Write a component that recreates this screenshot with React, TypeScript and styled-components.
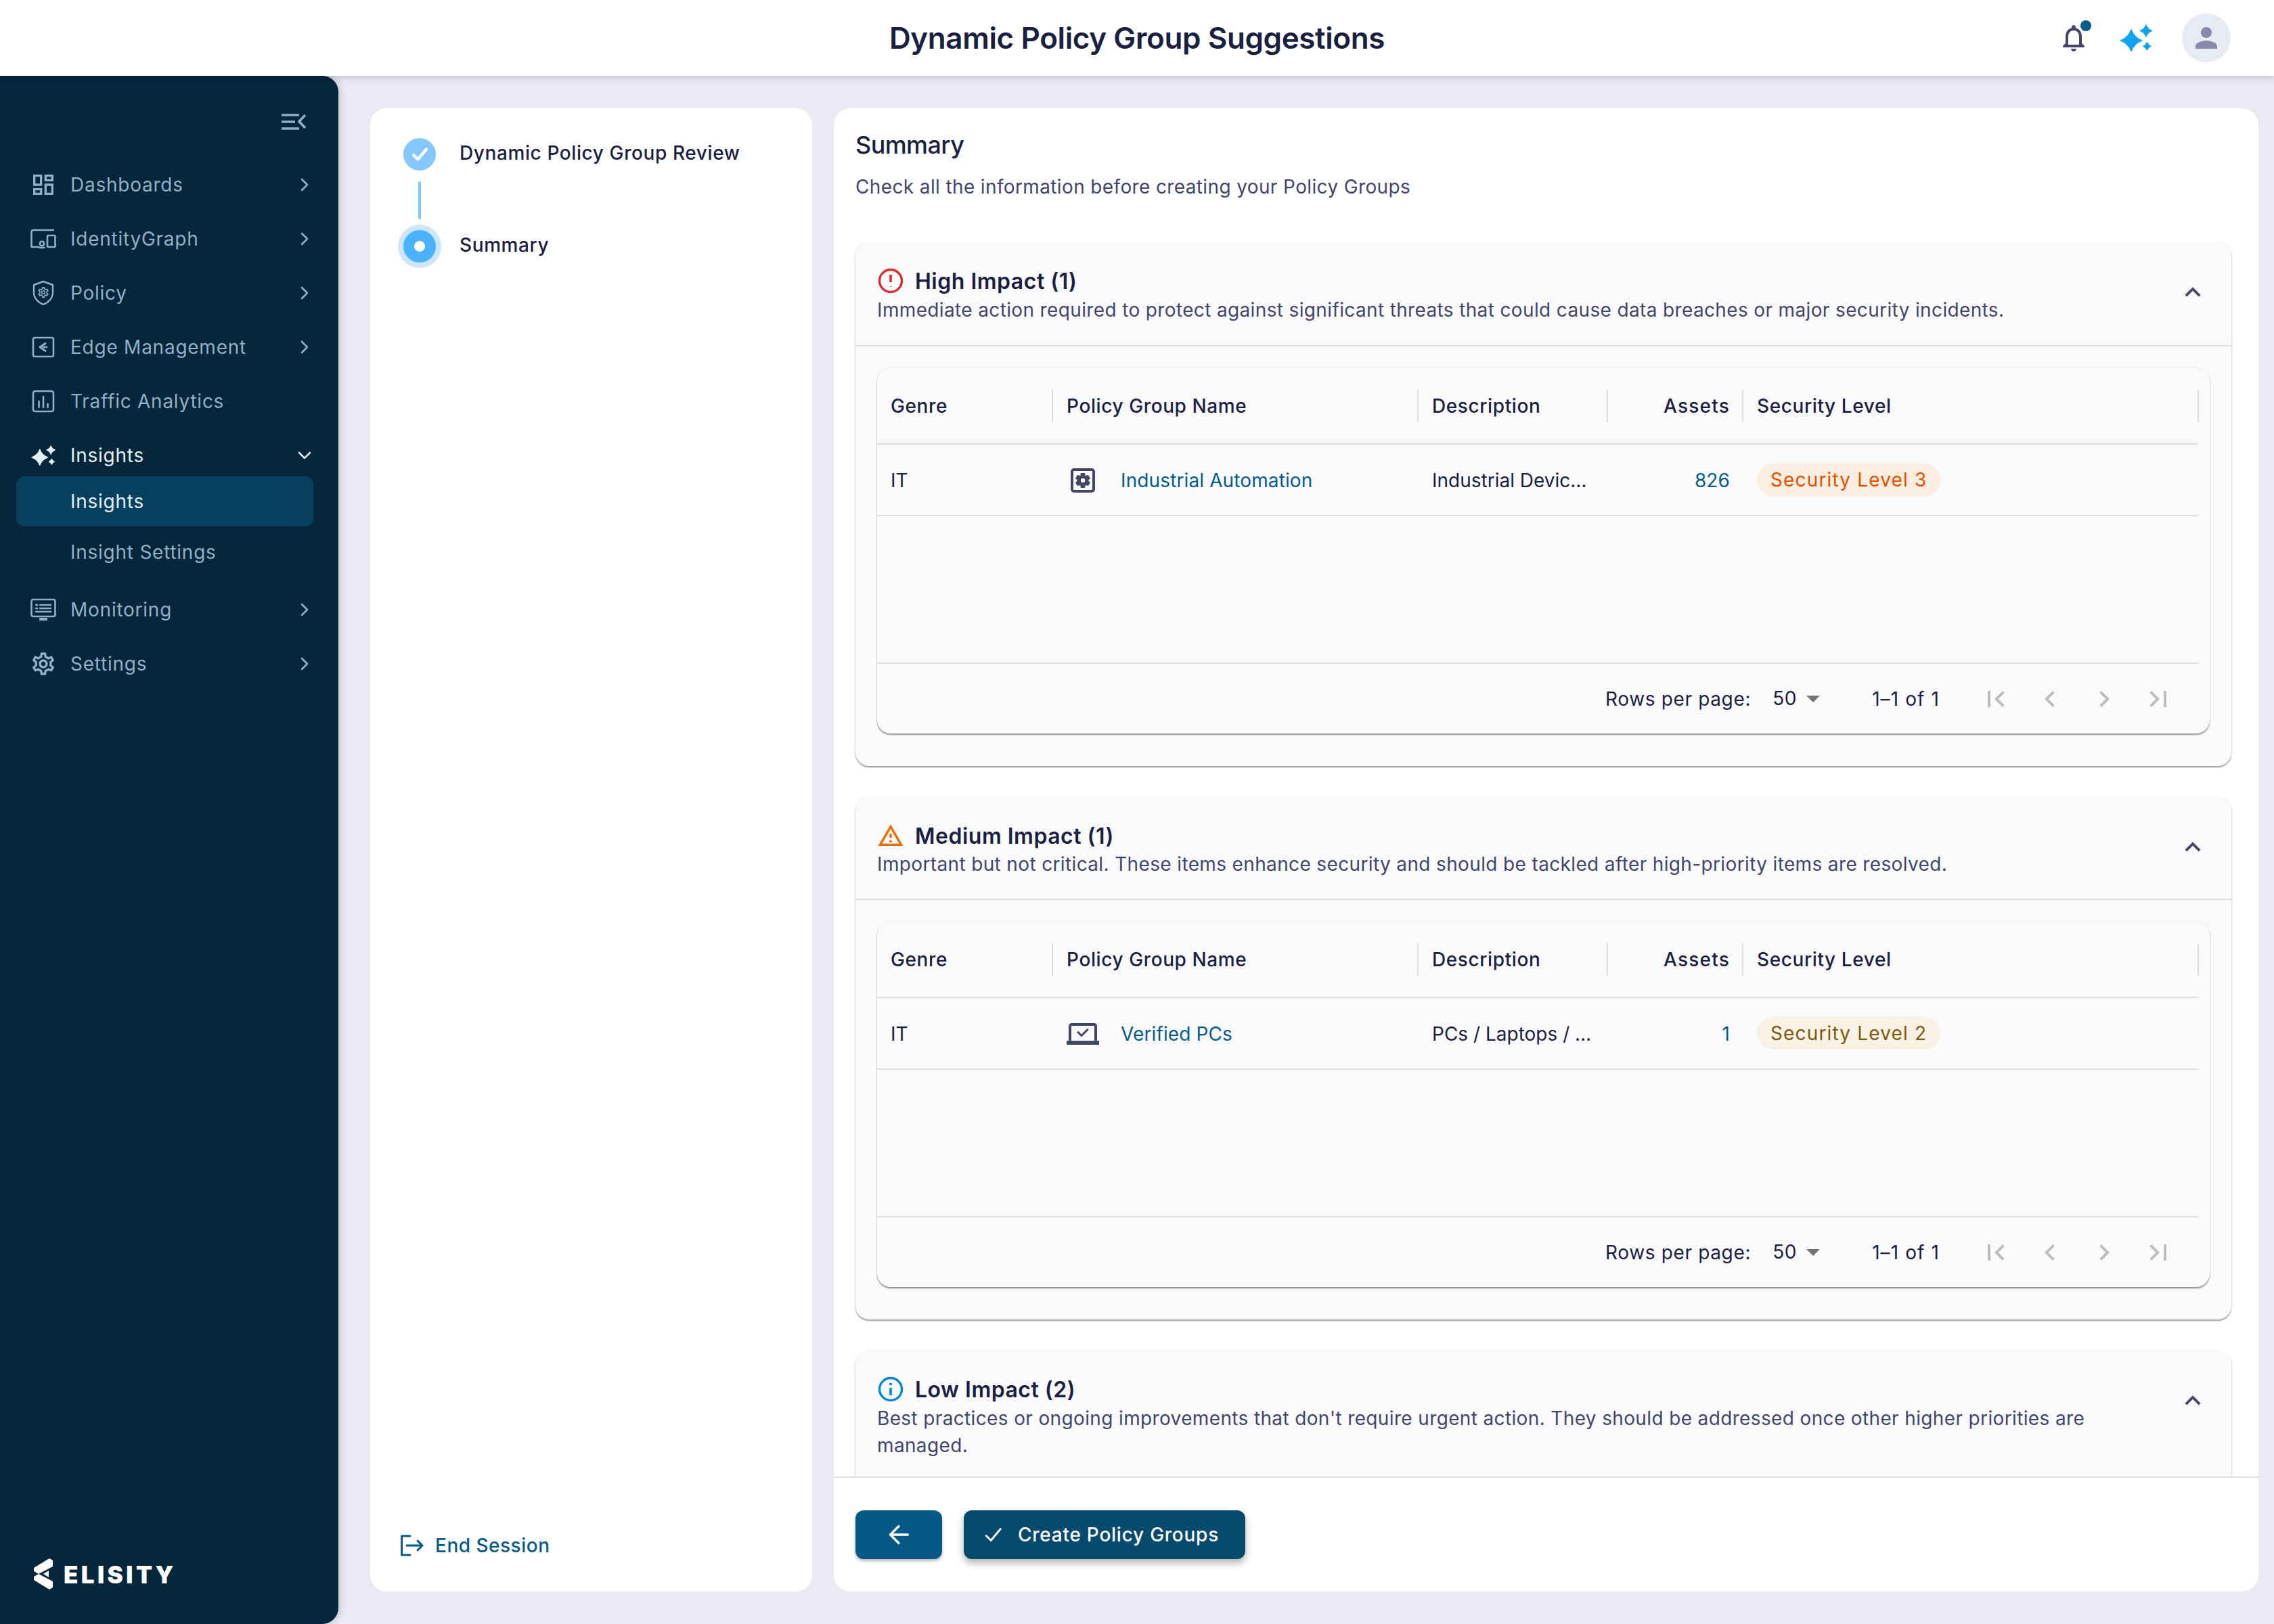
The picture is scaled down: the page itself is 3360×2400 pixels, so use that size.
import React from "react";
import styled, { createGlobalStyle } from "styled-components";

const Global = createGlobalStyle`
  html, body { margin: 0; padding: 0; background: #E9EAF3; }
  body { font-family: Inter, "Noto Sans", sans-serif; color: #1A2040; }
  * { box-sizing: border-box; }
`;

const Page = styled.div`
  width: 3360px; height: 2400px; display: flex; flex-direction: column; overflow: hidden; background: #E9EAF3;
`;
const TopBar = styled.header`
  height: 112px; flex: none; background: #fff; position: relative; z-index: 2;
  box-shadow: 0 2px 10px rgba(20, 24, 50, .22);
  display: flex; align-items: center; justify-content: center;
`;
const Title = styled.h1`
  margin: 0; font-size: 44px; font-weight: 600; letter-spacing: -.4px; line-height: 56px; color: #1A2040;
`;
const TopActions = styled.div`
  position: absolute; right: 64px; top: 20px; height: 72px; display: flex; align-items: center; gap: 44px;
`;
const BellWrap = styled.div`
  position: relative; width: 48px; height: 48px;
`;
const BellDot = styled.span`
  position: absolute; right: -2px; top: -2px; width: 16px; height: 16px; border-radius: 50%; background: #055C8A;
`;
const Avatar = styled.div`
  width: 72px; height: 72px; border-radius: 50%; background: #E9EBF4; display: flex; align-items: center; justify-content: center;
`;
const Body = styled.div`
  flex: 1; display: flex; min-height: 0;
`;
const Sidebar = styled.aside`
  width: 500px; flex: none; background: #05263B; border-radius: 0 24px 24px 0;
  box-shadow: 4px 0 10px rgba(20, 24, 50, .14); display: flex; flex-direction: column; position: relative; z-index: 1;
`;
const ToggleRow = styled.div`
  height: 121px; padding: 56px 48px 0 0; display: flex; justify-content: flex-end; align-items: flex-start; color: #8FB1C8;
`;
const NavList = styled.nav`
  flex: 1; display: flex; flex-direction: column;
`;
const NavRow = styled.div<{ $active?: boolean }>`
  height: 80px; display: flex; align-items: center; padding: 0 38px 0 40px;
  color: ${(p) => (p.$active ? "#E3EFF7" : "#8FB1C8")};
  font-size: 28px; letter-spacing: .75px; font-weight: 400;
`;
const NavIcon = styled.span`
  width: 48px; height: 48px; display: flex; align-items: center; justify-content: center; margin-right: 16px; flex: none;
`;
const NavLabel = styled.span`flex: 1;`;
const SubList = styled.div`
  margin: -9px 37px 8px 24px; display: flex; flex-direction: column; gap: 1px;
`;
const SubItem = styled.div<{ $active?: boolean }>`
  height: 74px; padding-left: 80px; display: flex; align-items: center; border-radius: 12px;
  font-size: 28px; letter-spacing: .75px;
  color: ${(p) => (p.$active ? "#E3EFF7" : "#8FB1C8")};
  background: ${(p) => (p.$active ? "#07405F" : "transparent")};
`;
const LogoRow = styled.div`
  height: 96px; margin-bottom: 50px; padding-left: 48px; display: flex; align-items: flex-end; gap: 16px; color: #fff;
`;
const LogoText = styled.span`
  font-size: 35px; line-height: 46px; font-weight: 900; letter-spacing: 4.4px; color: #fff;
`;
const Main = styled.main`
  flex: 1; min-width: 0; display: flex; gap: 32px; padding: 48px 23px 48px 47px;
`;
const StepPanel = styled.section`
  width: 653px; flex: none; background: #fff; border-radius: 24px; display: flex; flex-direction: column;
  padding: 44px 0 48px 49px;
`;
const Step = styled.div`
  display: flex; align-items: center; gap: 35px; height: 48px;
  font-size: 28px; font-weight: 500; letter-spacing: .6px; color: #1A2040;
`;
const StepLabel = styled.span`
  margin-bottom: 4px;
`;
const StepDone = styled.span`
  width: 48px; height: 48px; border-radius: 50%; background: #84C7FE; display: flex; align-items: center; justify-content: center; flex: none;
`;
const StepCurrent = styled.span`
  width: 48px; height: 48px; border-radius: 50%; background: #4BB2FF; box-shadow: 0 0 0 8px #CBE7FE;
  display: flex; align-items: center; justify-content: center; flex: none;
  &::after { content: ""; width: 16px; height: 16px; border-radius: 50%; background: #fff; }
`;
const Connector = styled.span`
  display: block; width: 4px; height: 56px; margin: 16px 0 16px 22px; border-radius: 2px; background: #84C7FE;
`;
const Spacer = styled.div`flex: 1;`;
const EndSession = styled.div`
  display: flex; align-items: center; gap: 16px; margin-left: -5px; height: 40px;
  font-size: 28px; font-weight: 500; letter-spacing: .5px; color: #075A88;
`;
const ContentPanel = styled.section`
  flex: 1; min-width: 0; background: #fff; border-radius: 24px; display: flex; flex-direction: column; overflow: hidden;
`;
const Scroll = styled.div`
  flex: 1; min-height: 0; overflow: hidden; padding: 32px 40px 0 32px;
`;
const Heading = styled.h2`
  margin: 0; font-size: 36px; line-height: 44px; font-weight: 500; letter-spacing: -.6px; color: #1A2040;
`;
const SubHeading = styled.p`
  margin: 20px 0 62px; font-size: 28px; line-height: 40px; letter-spacing: .37px; color: #42466A;
`;
const Accordion = styled.article`
  background: #FAFAFC; border-radius: 20px; margin-bottom: 46px;
  box-shadow: 0 2px 2px rgba(0,0,0,.38), 0 0 3px rgba(0,0,0,.08);
`;
const AccHead = styled.div<{ $pb: number }>`
  display: flex; align-items: flex-start; gap: 40px; padding: 35px 32px ${(p) => p.$pb}px 32px; border-bottom: 2px solid #DEDEE3;
`;
const AccText = styled.div`flex: 1; min-width: 0;`;
const AccTitle = styled.div`
  display: flex; align-items: center; gap: 16px; height: 44px; font-size: 32px; font-weight: 600; letter-spacing: .5px; color: #1A2040;
`;
const AccDesc = styled.div<{ $mt: number }>`
  margin-top: ${(p) => p.$mt}px; font-size: 28px; line-height: 40px; letter-spacing: .36px; color: #42466A;
`;
const AccToggle = styled.span`
  flex: none; margin: 16px 0 0 0; width: 46px; height: 46px; position: relative; right: 2px;
`;
const AccBody = styled.div`
  padding: 32px 32px 48px;
`;
const TableCard = styled.div`
  background: #FAFAFC; border-radius: 20px; padding-right: 16px; height: 540px; display: flex; flex-direction: column;
  box-shadow: 0 2px 2px rgba(0,0,0,.42), 0 0 3px rgba(0,0,0,.08);
`;
const HeadRow = styled.div`
  flex: none; height: 113px; display: grid; grid-template-columns: 260px 540px 280px 200px 1fr; align-items: center; border-bottom: 2px solid #DEDEE3;
`;
const HeadCell = styled.div<{ $right?: boolean }>`
  height: 48px; display: flex; align-items: center; padding: 0 18px 0 20px; border-right: 2px solid #DEDEE3;
  justify-content: ${(p) => (p.$right ? "flex-end" : "flex-start")};
  font-size: 28px; font-weight: 500; letter-spacing: ${(p) => (p.$right ? "1.2px" : ".6px")}; color: #1A2040;
`;
const DataRow = styled.div`
  flex: none; height: 106px; display: grid; grid-template-columns: 260px 540px 280px 200px 1fr; align-items: center; border-bottom: 2px solid #DEDEE3;
`;
const Cell = styled.div<{ $right?: boolean }>`
  padding: 2px ${(p) => (p.$right ? "20px" : "18px")} 0 20px; font-size: 28px; letter-spacing: 0; color: #1A2040; white-space: nowrap;
  display: flex; align-items: center;
  justify-content: ${(p) => (p.$right ? "flex-end" : "flex-start")};
`;
const Link = styled.span`
  color: #055C88; letter-spacing: .12px;
`;
const GroupIcon = styled.span`
  width: 48px; height: 48px; display: flex; align-items: center; justify-content: center; margin-right: 32px; flex: none;
`;
const Chip = styled.span<{ $bg: string; $fg: string }>`
  height: 48px; padding: 0 20px; border-radius: 24px; display: inline-flex; align-items: center; margin-top: -2px;
  background: ${(p) => p.$bg}; color: ${(p) => p.$fg}; letter-spacing: 1.15px; font-weight: 400;
`;
const Empty = styled.div`
  flex: none; height: 218px; border-bottom: 2px solid #DEDEE3;
`;
const Pager = styled.div`
  flex: 1; display: flex; align-items: center; justify-content: flex-end; font-size: 28px; letter-spacing: .65px; color: #1A2040; padding: 0 36px 0 0;
`;
const PagerSelect = styled.div`
  display: flex; align-items: center; margin: -2px 0 0 32px; width: 116px;
`;
const PagerCount = styled.span`margin: 0 59px 0 31px; letter-spacing: 1.1px;`;
const PagerBtns = styled.div`
  display: flex; gap: 32px;
`;
const Foot = styled.footer`
  flex: none; height: 170px; border-top: 2px solid #E0E0E4; padding: 48px 32px; display: flex; gap: 32px;
`;
const BackBtn = styled.button`
  width: 128px; height: 72px; border: 0; border-radius: 12px; background: #075985; display: flex; align-items: center; justify-content: center;
  box-shadow: 0 3px 4px rgba(0,0,0,.28);
`;
const PrimaryBtn = styled.button`
  width: 416px; height: 72px; border: 0; border-radius: 12px; background: #074A6D; color: #fff; display: flex; align-items: center; gap: 20px; padding: 0 0 0 26px;
  font-family: inherit; font-size: 28px; font-weight: 500; letter-spacing: .75px;
  box-shadow: 0 6px 12px rgba(0,0,0,.3);
`;
const Glyph = styled.svg<{ $c?: string }>`
  display: block; flex: none; fill: ${(p) => p.$c || "currentColor"};
`;
const Outline = styled.svg<{ $c?: string; $w?: number }>`
  display: block; flex: none; fill: none; stroke: ${(p) => p.$c || "currentColor"}; stroke-width: ${(p) => p.$w ?? 2};
  stroke-linecap: round; stroke-linejoin: round;
`;

const GEAR = "M19.43 12.98c.04-.32.07-.64.07-.98 0-.34-.03-.66-.07-.98l2.11-1.65c.19-.15.24-.42.12-.64l-2-3.46c-.09-.16-.26-.25-.44-.25-.06 0-.12.01-.17.03l-2.49 1c-.52-.4-1.08-.73-1.69-.98l-.38-2.65C14.46 2.18 14.25 2 14 2h-4c-.25 0-.46.18-.49.42l-.38 2.65c-.61.25-1.17.59-1.69.98l-2.49-1c-.06-.02-.12-.03-.18-.03-.17 0-.34.09-.43.25l-2 3.46c-.13.22-.07.49.12.64l2.11 1.65c-.04.32-.07.65-.07.98 0 .33.03.66.07.98l-2.11 1.65c-.19.15-.24.42-.12.64l2 3.46c.09.16.26.25.44.25.06 0 .12-.01.17-.03l2.49-1c.52.4 1.08.73 1.69.98l.38 2.65c.03.24.24.42.49.42h4c.25 0 .46-.18.49-.42l.38-2.65c.61-.25 1.17-.59 1.69-.98l2.49 1c.06.02.12.03.18.03.17 0 .34-.09.43-.25l2-3.46c.12-.22.07-.49-.12-.64l-2.11-1.65zm-1.98-1.71c.04.31.05.52.05.73 0 .21-.02.43-.05.73l-.14 1.13.89.7 1.08.84-.7 1.21-1.27-.51-1.04-.42-.9.68c-.43.32-.84.56-1.25.73l-1.06.43-.16 1.13-.2 1.35h-1.4l-.19-1.35-.16-1.13-1.06-.43c-.43-.18-.83-.41-1.23-.71l-.91-.7-1.06.43-1.27.51-.7-1.21 1.08-.84.89-.7-.14-1.13c-.03-.31-.05-.54-.05-.74s.02-.43.05-.73l.14-1.13-.89-.7-1.08-.84.7-1.21 1.27.51 1.04.42.9-.68c.43-.32.84-.56 1.25-.73l1.06-.43.16-1.13.2-1.35h1.39l.19 1.35.16 1.13 1.06.43c.43.18.83.41 1.23.71l.91.7 1.06-.43 1.27-.51.7 1.21-1.07.85-.89.7.14 1.13zM12 8c-2.21 0-4 1.79-4 4s1.79 4 4 4 4-1.79 4-4-1.79-4-4-4zm0 6c-1.1 0-2-.9-2-2s.9-2 2-2 2 .9 2 2-.9 2-2 2z";
const SOLIDGEAR = "M19.14 12.94c.04-.3.06-.61.06-.94 0-.32-.02-.64-.07-.94l2.03-1.58c.18-.14.23-.41.12-.61l-1.92-3.32c-.12-.22-.37-.29-.59-.22l-2.39.96c-.5-.38-1.03-.7-1.62-.94l-.36-2.54c-.04-.24-.24-.41-.48-.41h-3.84c-.24 0-.43.17-.47.41l-.36 2.54c-.59.24-1.13.57-1.62.94l-2.39-.96c-.22-.08-.47 0-.59.22L2.74 8.87c-.12.21-.08.47.12.61l2.03 1.58c-.05.3-.09.63-.09.94s.02.64.07.94l-2.03 1.58c-.18.14-.23.41-.12.61l1.92 3.32c.12.22.37.29.59.22l2.39-.96c.5.38 1.03.7 1.62.94l.36 2.54c.05.24.24.41.48.41h3.84c.24 0 .44-.17.47-.41l.36-2.54c.59-.24 1.13-.56 1.62-.94l2.39.96c.22.08.47 0 .59-.22l1.92-3.32c.12-.22.07-.47-.12-.61l-2.01-1.58zM12 15.6c-1.98 0-3.6-1.62-3.6-3.6s1.62-3.6 3.6-3.6 3.6 1.62 3.6 3.6-1.62 3.6-3.6 3.6z";

const star = (x: number, y: number, r: number) => {
  const k = r * 0.26;
  return `M${x} ${y - r}Q${x + k} ${y - k} ${x + r} ${y}Q${x + k} ${y + k} ${x} ${y + r}Q${x - k} ${y + k} ${x - r} ${y}Q${x - k} ${y - k} ${x} ${y - r}Z`;
};

const Sparkles = ({ size, c }: { size: number; c?: string }) => (
  <Outline width={size} height={size * 0.85} viewBox="0 0 48 41" $c={c} $w={1.5}>
    <path fill={c || "currentColor"} d={star(17, 24, 16)} />
    <path fill={c || "currentColor"} d={star(39, 9.5, 8.5)} />
    <path fill={c || "currentColor"} d={star(40.5, 32.5, 5.5)} />
  </Outline>
);
const Chevron = ({ down }: { down?: boolean }) => (
  <Outline width="24" height="24" viewBox="0 0 24 24" $w={2.6}>
    <polyline points={down ? "4,8 12,16 20,8" : "8,4 16,12 8,20"} />
  </Outline>
);
const Dashboards = () => (
  <Glyph width="40" height="40" viewBox="0 0 24 24">
    <path d="M19 5v2h-4V5h4M9 5v6H5V5h4m10 8v6h-4v-6h4M9 17v2H5v-2h4M21 3h-8v6h8V3zM11 3H3v10h8V3zm10 8h-8v10h8V11zm-10 4H3v6h8v-6z" />
  </Glyph>
);
const Devices = () => (
  <Outline width="38" height="30" viewBox="0 0 38 30" $w={2.6}>
    <path d="M34 2H4a2.5 2.5 0 0 0-2.500 2.500V27H12" />
    <rect x="25" y="10" width="11.500" height="17" rx="1" />
    <circle cx="17" cy="22" r="3.200" />
    <path d="M13.500 28h7" />
  </Outline>
);
const ShieldGear = () => (
  <Outline width="32" height="38" viewBox="0 0 32 38" $w={2.4}>
    <path d="M16 2 30 7v11c0 8.500-6 15-14 18C8 33 2 26.500 2 18V7z" />
    <g transform="translate(6.500 8.500) scale(.8)"><path strokeWidth="0" fill="currentColor" d={GEAR} /></g>
  </Outline>
);
const EdgeBox = () => (
  <Outline width="34" height="32" viewBox="0 0 34 32" $w={2.6}>
    <rect x="2" y="2" width="30" height="28" rx="2.500" />
    <path d="M20 10.500 12 16l8 5.500" strokeWidth="3" />
    <path d="M17 16h5" />
  </Outline>
);
const TrafficBox = () => (
  <Outline width="34" height="34" viewBox="0 0 34 34" $w={2.6}>
    <rect x="2" y="2" width="30" height="30" rx="3" />
    <path d="M10.500 26v-9M17 26V10M23.500 26v-5" />
  </Outline>
);
const Monitor = () => (
  <Outline width="38" height="34" viewBox="0 0 38 34" $w={2.6}>
    <rect x="1.500" y="2" width="35" height="25" rx="2.500" />
    <path d="M8 10h2M14 10h16M8 15h2M14 15h16M8 20h22" />
    <path d="M13 31h12" strokeWidth="4" strokeLinecap="butt" />
  </Outline>
);
const Cog = () => (
  <Glyph width="40" height="40" viewBox="0 0 24 24"><path d={GEAR} /></Glyph>
);
const MenuToggle = () => (
  <Outline width="36" height="24" viewBox="0 0 36 24" $w={3.4}>
    <g strokeLinecap="butt">
      <path d="M0 2h26M0 12h20M0 22h26" />
      <path d="M35 2 26 11.500 35 21" strokeWidth="3.600" />
    </g>
  </Outline>
);
const Logo = () => (
  <Glyph width="30" height="48" viewBox="0 0 30 48" $c="#fff">
    <path d="M25 1 30 4v9L9 24l-7-4V15z" />
    <path d="M2 28 9 24l21 11v9l-5 3L2 33z" />
    <path d="M24 19v10l-8-5z" />
  </Glyph>
);
const LogOut = () => (
  <Outline width="36" height="32" viewBox="0 0 36 32" $c="#075A88" $w={3}>
    <path d="M15 2H2.500v28H15" />
    <path d="M10 16h23M26 9l7 7-7 7" />
  </Outline>
);
const Bell = () => (
  <Glyph width="48" height="48" viewBox="0 0 24 24" $c="#444763">
    <path d="M12 22c1.100 0 2-.9 2-2h-4c0 1.100.9 2 2 2zm6-6v-5c0-3.070-1.630-5.640-4.500-6.320V4c0-.83-.67-1.500-1.500-1.500s-1.500.67-1.500 1.500v.68C7.640 5.360 6 7.920 6 11v5l-2 2v1h16v-1l-2-2zm-2 1H8v-6c0-2.480 1.510-4.500 4-4.500s4 2.020 4 4.500v6z" />
  </Glyph>
);
const Person = () => (
  <Glyph width="48" height="48" viewBox="0 0 24 24" $c="#8589AA">
    <path d="M12 12c2.210 0 4-1.790 4-4s-1.790-4-4-4-4 1.790-4 4 1.790 4 4 4zm0 2c-2.670 0-8 1.340-8 4v2h16v-2c0-2.660-5.330-4-8-4z" />
  </Glyph>
);
const Check = ({ size, w }: { size: number; w: number }) => (
  <Outline width={size} height={size} viewBox="0 0 24 24" $c="#fff" $w={w} strokeLinecap="butt">
    <path d="M5 13l5 5L20 6" />
  </Outline>
);
const ArrowUp = () => (
  <AccToggle>
    <Glyph width="46" height="46" viewBox="0 0 24 24" $c="#42466A">
      <path d="M7.410 15.410 12 10.830l4.590 4.580L18 14l-6-6-6 6z" />
    </Glyph>
  </AccToggle>
);
const ErrorIc = () => (
  <Outline width="40" height="40" viewBox="0 0 40 40" $c="#D32F2F" $w={3.4}>
    <circle cx="20" cy="20" r="16.500" />
    <path d="M20 11v11M20 28v.5" strokeLinecap="butt" strokeWidth="3.600" />
  </Outline>
);
const WarnIc = () => (
  <Glyph width="40" height="40" viewBox="0 0 24 24" $c="#ED6C02">
    <path d="M12 5.990 19.530 19H4.470L12 5.990M12 2 1 21h22L12 2zm1 14h-2v2h2v-2zm0-6h-2v4h2v-4z" />
  </Glyph>
);
const InfoIc = () => (
  <Outline width="40" height="40" viewBox="0 0 40 40" $c="#0288D1" $w={3.4}>
    <circle cx="20" cy="20" r="16.500" />
    <path d="M20 18v11M20 11v3" strokeLinecap="butt" strokeWidth="3.600" />
  </Outline>
);
const PolicyGear = () => (
  <Outline width="36" height="36" viewBox="0 0 36 36" $c="#444763" $w={4}>
    <rect x="2" y="2" width="32" height="32" rx="3" />
    <g transform="translate(5 5) scale(1.08)"><path strokeWidth="1.300" fill="#444763" d={SOLIDGEAR} /></g>
  </Outline>
);
const LaptopCheck = () => (
  <Outline width="48" height="32" viewBox="0 0 48 32" $c="#444763" $w={4}>
    <path d="M5 26V4.500A2.500 2.500 0 0 1 7.500 2h33A2.500 2.500 0 0 1 43 4.500V26" />
    <path d="M0 29h48" strokeWidth="6" strokeLinecap="butt" />
    <path d="M17 13.500l5 5 9-9" strokeWidth="3" />
  </Outline>
);
const PagerIcon = ({ d }: { d: string }) => (
  <Glyph width="48" height="48" viewBox="0 0 24 24" $c="#BDBDBD"><path d={d} /></Glyph>
);
const Caret = () => (
  <Glyph width="48" height="48" viewBox="0 0 24 24" $c="#757575"><path d="m7 10 5 5 5-5z" /></Glyph>
);

const PAGES = [
  "M18.410 16.590 13.820 12l4.590-4.590L17 6l-6 6 6 6zM6 6h2v12H6z",
  "M15.410 7.410 14 6l-6 6 6 6 1.410-1.410L10.830 12z",
  "M10 6 8.590 7.410 13.170 12l-4.580 4.590L10 18l6-6z",
  "M5.590 7.410 10.180 12l-4.590 4.590L7 18l6-6-6-6zM16 6h2v12h-2z",
];

type Row = { icon: React.ReactNode; name: string; desc: string; assets: string; level: string; bg: string; fg: string };

const ImpactTable = ({ r }: { r: Row }) => (
  <TableCard>
    <HeadRow>
      <HeadCell>Genre</HeadCell>
      <HeadCell>Policy Group Name</HeadCell>
      <HeadCell>Description</HeadCell>
      <HeadCell $right>Assets</HeadCell>
      <HeadCell>Security Level</HeadCell>
    </HeadRow>
    <DataRow>
      <Cell>IT</Cell>
      <Cell><GroupIcon>{r.icon}</GroupIcon><Link>{r.name}</Link></Cell>
      <Cell>{r.desc}</Cell>
      <Cell $right><Link>{r.assets}</Link></Cell>
      <Cell><Chip $bg={r.bg} $fg={r.fg}>{r.level}</Chip></Cell>
    </DataRow>
    <Empty />
    <Pager>
      Rows per page:
      <PagerSelect>50<Caret /></PagerSelect>
      <PagerCount>1–1 of 1</PagerCount>
      <PagerBtns>{PAGES.map((d) => <PagerIcon key={d} d={d} />)}</PagerBtns>
    </Pager>
  </TableCard>
);

export default function App() {
  return (
    <Page>
      <Global />
      <TopBar>
        <Title>Dynamic Policy Group Suggestions</Title>
        <TopActions>
          <BellWrap><Bell /><BellDot /></BellWrap>
          <Sparkles size={48} c="#0EA5EE" />
          <Avatar><Person /></Avatar>
        </TopActions>
      </TopBar>
      <Body>
        <Sidebar>
          <ToggleRow><MenuToggle /></ToggleRow>
          <NavList>
            <NavRow><NavIcon><Dashboards /></NavIcon><NavLabel>Dashboards</NavLabel><Chevron /></NavRow>
            <NavRow><NavIcon><Devices /></NavIcon><NavLabel>IdentityGraph</NavLabel><Chevron /></NavRow>
            <NavRow><NavIcon><ShieldGear /></NavIcon><NavLabel>Policy</NavLabel><Chevron /></NavRow>
            <NavRow><NavIcon><EdgeBox /></NavIcon><NavLabel>Edge Management</NavLabel><Chevron /></NavRow>
            <NavRow><NavIcon><TrafficBox /></NavIcon><NavLabel>Traffic Analytics</NavLabel></NavRow>
            <NavRow $active><NavIcon><Sparkles size={36} /></NavIcon><NavLabel>Insights</NavLabel><Chevron down /></NavRow>
            <SubList>
              <SubItem $active>Insights</SubItem>
              <SubItem>Insight Settings</SubItem>
            </SubList>
            <NavRow><NavIcon><Monitor /></NavIcon><NavLabel>Monitoring</NavLabel><Chevron /></NavRow>
            <NavRow><NavIcon><Cog /></NavIcon><NavLabel>Settings</NavLabel><Chevron /></NavRow>
          </NavList>
          <LogoRow><Logo /><LogoText>ELISITY</LogoText></LogoRow>
        </Sidebar>
        <Main>
          <StepPanel>
            <Step><StepDone><Check size={30} w={3.6} /></StepDone><StepLabel>Dynamic Policy Group Review</StepLabel></Step>
            <Connector />
            <Step><StepCurrent /><StepLabel>Summary</StepLabel></Step>
            <Spacer />
            <EndSession><LogOut />End Session</EndSession>
          </StepPanel>
          <ContentPanel>
            <Scroll>
              <Heading>Summary</Heading>
              <SubHeading>Check all the information before creating your Policy Groups</SubHeading>
              <Accordion>
                <AccHead $pb={32}>
                  <AccText>
                    <AccTitle><ErrorIc />High Impact (1)</AccTitle>
                    <AccDesc $mt={1}>Immediate action required to protect against significant threats that could cause data breaches or major security incidents.</AccDesc>
                  </AccText>
                  <ArrowUp />
                </AccHead>
                <AccBody>
                  <ImpactTable r={{ icon: <PolicyGear />, name: "Industrial Automation", desc: "Industrial Devic…", assets: "826", level: "Security Level 3", bg: "#FBEDE0", fg: "#E65100" }} />
                </AccBody>
              </Accordion>
              <Accordion>
                <AccHead $pb={31}>
                  <AccText>
                    <AccTitle><WarnIc />Medium Impact (1)</AccTitle>
                    <AccDesc $mt={0}>Important but not critical. These items enhance security and should be tackled after high-priority items are resolved.</AccDesc>
                  </AccText>
                  <ArrowUp />
                </AccHead>
                <AccBody>
                  <ImpactTable r={{ icon: <LaptopCheck />, name: "Verified PCs", desc: "PCs / Laptops / …", assets: "1", level: "Security Level 2", bg: "#F9F1E3", fg: "#7A5A10" }} />
                </AccBody>
              </Accordion>
              <Accordion>
                <AccHead $pb={60}>
                  <AccText>
                    <AccTitle><InfoIc />Low Impact (2)</AccTitle>
                    <AccDesc $mt={1}>Best practices or ongoing improvements that don't require urgent action. They should be addressed once other higher priorities are managed.</AccDesc>
                  </AccText>
                  <ArrowUp />
                </AccHead>
              </Accordion>
            </Scroll>
            <Foot>
              <BackBtn>
                <Outline width="40" height="40" viewBox="0 0 24 24" $c="#fff" $w={2}>
                  <path d="M20 12H4.500M12 4.500 4.500 12l7.500 7.500" />
                </Outline>
              </BackBtn>
              <PrimaryBtn><Check size={34} w={2} />Create Policy Groups</PrimaryBtn>
            </Foot>
          </ContentPanel>
        </Main>
      </Body>
    </Page>
  );
}
